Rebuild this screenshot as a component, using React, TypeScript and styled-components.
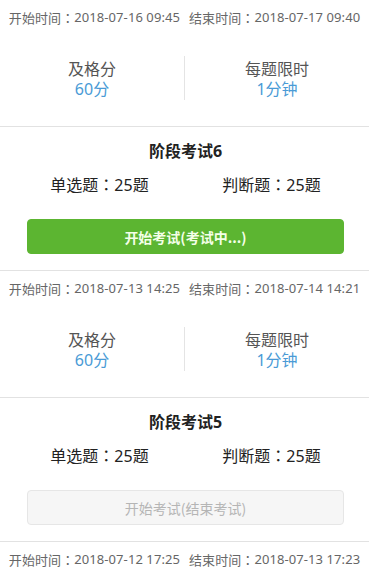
import React from "react";
import styled, { createGlobalStyle } from "styled-components";

const Global = createGlobalStyle`
  html, body { margin: 0; padding: 0; background: #fff; }
  body { font-family: "Noto Sans", "Noto Sans CJK SC", sans-serif; }
`;

const Page = styled.div`
  width: 369px;
  background: #fff;
`;

const Card = styled.section`
  display: flex;
  flex-direction: column;
`;

const TimeRow = styled.div`
  height: 34px;
  display: flex;
  align-items: center;
  justify-content: center;
  font-size: 13px;
  color: #666;
  white-space: nowrap;
  letter-spacing: 0.08px;
`;

const Colon = styled.span`
  font-family: "Noto Sans CJK TC", sans-serif;
`;

const Gap = styled.span`
  display: inline-block;
  width: 9px;
`;

const Stats = styled.div`
  height: 92px;
  display: grid;
  grid-template-columns: 1fr 1px 1fr;
  align-items: center;
  border-bottom: 1px solid #e2e2e2;
`;

const Stat = styled.div`
  display: flex;
  flex-direction: column;
  align-items: center;
  margin-top: -2px;
`;

const StatLabel = styled.div`
  font-size: 16px;
  line-height: 20px;
  color: #555;
`;

const StatValue = styled.div`
  font-size: 16px;
  line-height: 20px;
  color: #4a9bd6;
`;

const VLine = styled.div`
  width: 1px;
  height: 44px;
  background: #e4e4e4;
  margin-top: -4px;
`;

const Body = styled.div`
  display: flex;
  flex-direction: column;
  align-items: center;
  padding: 13px 25px 16px 27px;
  border-bottom: 1px solid #e2e2e2;
`;

const Title = styled.h3`
  margin: 0;
  font-size: 16px;
  line-height: 22px;
  font-weight: 700;
  color: #222;
`;

const Counts = styled.div`
  display: grid;
  grid-template-columns: 172px 172px;
  justify-content: center;
  margin-top: 11px;
  font-size: 16px;
  line-height: 22px;
  color: #222;
  text-align: center;
  white-space: nowrap;
`;

const Button = styled.button<{ $active: boolean }>`
  margin-top: 23px;
  width: 100%;
  height: 35px;
  border-radius: 4px;
  font-family: "Noto Sans CJK SC", sans-serif;
  font-size: 14px;
  font-weight: ${(p) => (p.$active ? 700 : 400)};
  border: 1px solid ${(p) => (p.$active ? "#5cb531" : "#e6e6e6")};
  background: ${(p) => (p.$active ? "#5cb531" : "#f6f6f6")};
  color: ${(p) => (p.$active ? "#f4ffe8" : "#b5b5b5")};
  cursor: pointer;
`;

type Exam = {
  start: string;
  end: string;
  title: string;
  button: string;
  active: boolean;
};

const exams: Exam[] = [
  { start: "2018-07-16 09:45", end: "2018-07-17 09:40", title: "阶段考试6", button: "开始考试(考试中...)", active: true },
  { start: "2018-07-13 14:25", end: "2018-07-14 14:21", title: "阶段考试5", button: "开始考试(结束考试)", active: false },
  { start: "2018-07-12 17:25", end: "2018-07-13 17:23", title: "阶段考试4", button: "开始考试(结束考试)", active: false },
];

export default function App() {
  return (
    <Page>
      <Global />
      {exams.map((e) => (
        <Card key={e.title}>
          <TimeRow>
            开始时间<Colon>：</Colon>{e.start}
            <Gap />
            结束时间<Colon>：</Colon>{e.end}
          </TimeRow>
          <Stats>
            <Stat>
              <StatLabel>及格分</StatLabel>
              <StatValue>60分</StatValue>
            </Stat>
            <VLine />
            <Stat>
              <StatLabel>每题限时</StatLabel>
              <StatValue>1分钟</StatValue>
            </Stat>
          </Stats>
          <Body>
            <Title>{e.title}</Title>
            <Counts>
              <span>单选题<Colon>：</Colon>25题</span>
              <span>判断题<Colon>：</Colon>25题</span>
            </Counts>
            <Button $active={e.active}>{e.button}</Button>
          </Body>
        </Card>
      ))}
    </Page>
  );
}
